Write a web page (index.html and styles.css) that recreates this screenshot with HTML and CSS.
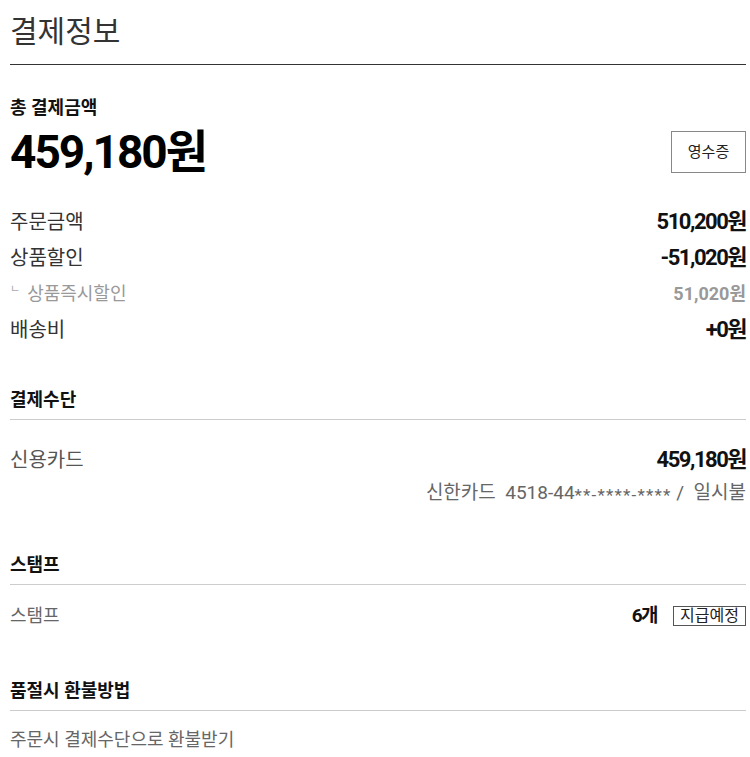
FILE: index.html
```html
<!DOCTYPE html>
<html>
	<head>
		<meta charset="UTF-8">
		<title>결제정보</title>
		<link rel="stylesheet" href="styles.css">
	</head>
	<body>
		<div id="pay">
			<h2 class="title">결제정보</h2>

			<div class="total">
				<h4>총 결제금액</h4>
				<div class="total-row">
					<strong>459,180원</strong>
					<a href="#" class="receipt">영수증</a>
				</div>
			</div>

			<ul class="detail">
				<li><span>주문금액</span><b>510,200원</b></li>
				<li><span>상품할인</span><b>-51,020원</b></li>
				<li class="sub"><span><i>ㄴ</i>상품즉시할인</span><b>51,020원</b></li>
				<li><span>배송비</span><b>+0원</b></li>
			</ul>

			<div class="block">
				<h4>결제수단</h4>
				<div class="row card"><span>신용카드</span><b>459,180원</b></div>
				<p class="info">신한카드&nbsp; 4518-44<em>**-****-****</em> / &nbsp;일시불</p>
			</div>

			<div class="block">
				<h4>스탬프</h4>
				<div class="row stamp">
					<span>스탬프</span>
					<div class="stamp-right"><b>6개</b><em class="tag">지급예정</em></div>
				</div>
			</div>

			<div class="block last">
				<h4>품절시 환불방법</h4>
				<p class="refund">주문시 결제수단으로 환불받기</p>
			</div>
		</div>
	</body>
</html>
```

FILE: styles.css
```css
body{
	margin: 0;
	background: #fff;
	font-family: Roboto, "Noto Sans CJK KR", sans-serif;
	color: #222;
}
#pay{
	padding: 0 4px 0 10px;
}
.title{
	margin: 0;
	padding: 12px 0 12px;
	font-size: 30px;
	line-height: 40px;
	font-weight: 400;
	color: #333;
	border-bottom: 1px solid #333;
}
h4{
	margin: 0;
	font-size: 18px;
	line-height: 24px;
	font-weight: 700;
	color: #111;
}
.total{
	margin-top: 31px;
}
.total-row{
	display: flex;
	justify-content: space-between;
	align-items: center;
	margin-top: 4px;
}
.total-row strong{
	font-size: 46px;
	line-height: 56px;
	letter-spacing: -2px;
	color: #000;
}
.receipt{
	box-sizing: border-box;
	width: 75px;
	height: 42px;
	border: 1px solid #888;
	text-align: center;
	font-size: 15px;
	line-height: 40px;
	color: #222;
	text-decoration: none;
}
.detail{
	margin: 24px 0 0;
	padding: 0;
}
.detail li{
	list-style: none;
	display: flex;
	justify-content: space-between;
	height: 36px;
	line-height: 36px;
	font-size: 20px;
}
.detail span{
	color: #333;
}
.detail b,.row b{
	font-size: 22px;
	letter-spacing: -1.5px;
	color: #111;
}
.detail .sub{
	font-size: 18px;
}
.detail .sub span,.detail .sub b{
	color: #999;
}
.detail .sub b{
	font-size: 18px;
	letter-spacing: 0;
}
.sub i{
	font-style: normal;
	font-size: 11px;
	vertical-align: top;
	line-height: 28px;
	margin-right: 7px;
	color: #aaa;
}
.block{
	margin-top: 40px;
}
.block h4{
	padding-bottom: 7px;
	border-bottom: 1px solid #ccc;
}
.row{
	display: flex;
	justify-content: space-between;
	align-items: center;
	line-height: 30px;
}
.card{
	padding-top: 25px;
	font-size: 20px;
}
.card span{color: #555;}
.info{
	margin: 6px 0 0;
	text-align: right;
	font-size: 19px;
	line-height: 24px;
	color: #666;
}
.info em{
	font-style: normal;
	font-size: 17px;
	letter-spacing: 1.2px;
	vertical-align: -2px;
}
.block:nth-of-type(3){
	margin-top: 46px;
}
.stamp{
	padding-top: 16px;
	font-size: 18px;
}
.stamp span{color: #666;}
.stamp .stamp-right b{
	font-size: 19px;
	letter-spacing: -1.5px;
}
.stamp-right{
	display: flex;
	align-items: center;
}
.tag{
	font-style: normal;
	box-sizing: border-box;
	height: 20px;
	margin-left: 16px;
	padding: 0 6px;
	border: 1px solid #555;
	font-size: 16px;
	line-height: 18px;
	color: #222;
}
.last{
	margin-top: 48px;
}
.refund{
	margin: 14px 0 0;
	font-size: 18px;
	line-height: 30px;
	color: #666;
}
```
